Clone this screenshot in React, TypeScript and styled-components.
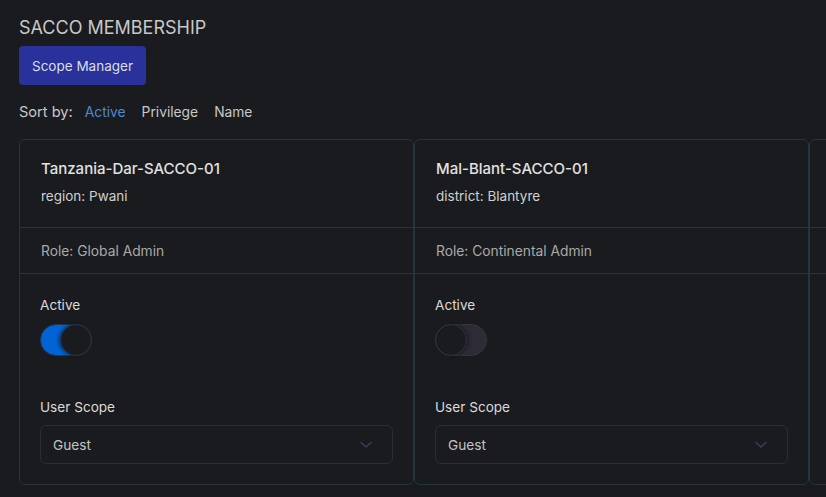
import React from "react";
import styled, { createGlobalStyle } from "styled-components";

const Global = createGlobalStyle`
  html, body { margin: 0; padding: 0; background: #1a1b1e; }
  body { font-family: Inter, "Noto Sans", sans-serif; color: #c9c9c9; overflow: hidden; }
  * { box-sizing: border-box; }
`;

const Page = styled.div`
  width: 826px;
  height: 497px;
  background: #1a1b1e;
  padding: 16px 0 0 19px;
  overflow: hidden;
`;

const Title = styled.h1`
  margin: 0;
  font-size: 18px;
  font-weight: 400;
  line-height: 24px;
  color: #c8c8c8;
`;

const PrimaryButton = styled.button`
  margin-top: 6px;
  height: 39px;
  padding: 0 13px;
  border: none;
  border-radius: 4px;
  background: #28329a;
  color: #dcdde8;
  font-family: inherit;
  font-size: 13.5px;
  display: block;
`;

const SortRow = styled.div`
  display: flex;
  align-items: center;
  gap: 16px;
  margin-top: 17px;
  height: 20px;
`;

const SortLabel = styled.span`
  color: #c8c8c8;
  font-size: 14.6px;
  margin-right: -4px;
`;

const SortOption = styled.span<{ $active?: boolean }>`
  color: ${(p) => (p.$active ? "#5288d0" : "#c8c8c8")};
  font-size: 13.8px;
`;

const Cards = styled.div`
  display: flex;
  margin-top: 17px;
`;

const Card = styled.div`
  flex: 0 0 395px;
  height: 346px;
  border: 1px solid #25353f;
  border-radius: 6px;
  background: #1a1b1e;
  display: flex;
  flex-direction: column;
`;

const Header = styled.div`
  height: 88px;
  padding: 19px 21px 0;
  border-bottom: 1px solid #25353f;
`;

const CardTitle = styled.div`
  font-size: 15px;
  font-weight: 500;
  color: #e2e2e2;
  line-height: 20px;
`;

const Meta = styled.div`
  margin-top: 8px;
  font-size: 13.5px;
  color: #cfcfcf;
  line-height: 18px;
`;

const RoleRow = styled.div`
  height: 46px;
  padding: 0 21px;
  display: flex;
  align-items: center;
  font-size: 13.8px;
  color: #a9a9a9;
  border-bottom: 1px solid #25353f;
`;

const Body = styled.div`
  padding: 21px 20px 0;
  display: flex;
  flex-direction: column;
`;

const FieldLabel = styled.div`
  font-size: 13.6px;
  color: #dadada;
  line-height: 20px;
  min-height: 20px;
`;

const Toggle = styled.div<{ $on?: boolean }>`
  margin-top: 9px;
  width: 52px;
  height: 32px;
  border-radius: 16px;
  background: ${(p) => (p.$on ? "#0064d4" : "#2d2c36")};
  border: 1px solid ${(p) => (p.$on ? "#1e3550" : "#34343c")};
  position: relative;
`;

const Thumb = styled.div<{ $on?: boolean }>`
  position: absolute;
  top: -1px;
  ${(p) => (p.$on ? "right: -1px;" : "left: -1px;")}
  width: 32px;
  height: 32px;
  border-radius: 50%;
  background: #1a1b1e;
  border: 1px solid ${(p) => (p.$on ? "#25384c" : "#34343c")};
  box-shadow: ${(p) => (p.$on ? "-2px 0 3px rgba(0,0,0,0.35)" : "2px 0 3px rgba(0,0,0,0.35)")};
`;

const ScopeLabel = styled(FieldLabel)`
  margin-top: 41px;
`;

const Select = styled.div`
  margin-top: 8px;
  height: 39px;
  border: 1px solid #2b2d31;
  border-radius: 6px;
  display: flex;
  align-items: center;
  justify-content: space-between;
  padding: 0 20px 0 12px;
  font-size: 13.7px;
  color: #c4c4c4;
`;

const Chevron = () => (
  <svg width="12" height="8" viewBox="0 0 12 8" fill="none">
    <path d="M1 1.5 L6 6 L11 1.5" stroke="#3b4160" strokeWidth="1.3" strokeLinecap="round" strokeLinejoin="round" />
  </svg>
);

type Item = { name: string; meta: string; role: string; active: boolean };

const items: Item[] = [
  { name: "Tanzania-Dar-SACCO-01", meta: "region: Pwani", role: "Role: Global Admin", active: true },
  { name: "Mal-Blant-SACCO-01", meta: "district: Blantyre", role: "Role: Continental Admin", active: false },
];

export default function App() {
  return (
    <Page>
      <Global />
      <Title>SACCO MEMBERSHIP</Title>
      <PrimaryButton>Scope Manager</PrimaryButton>
      <SortRow>
        <SortLabel>Sort by:</SortLabel>
        <SortOption $active>Active</SortOption>
        <SortOption>Privilege</SortOption>
        <SortOption>Name</SortOption>
      </SortRow>
      <Cards>
        {items.map((it, i) => (
          <Card key={i}>
            <Header>
              <CardTitle>{it.name}</CardTitle>
              <Meta>{it.meta}</Meta>
            </Header>
            <RoleRow>{it.role}</RoleRow>
            <Body>
              <FieldLabel>Active</FieldLabel>
              <Toggle $on={it.active}>
                <Thumb $on={it.active} />
              </Toggle>
              <ScopeLabel>User Scope</ScopeLabel>
              <Select>
                <span>Guest</span>
                <Chevron />
              </Select>
            </Body>
          </Card>
        ))}
        <Card>
          <Header />
          <RoleRow />
        </Card>
      </Cards>
    </Page>
  );
}
